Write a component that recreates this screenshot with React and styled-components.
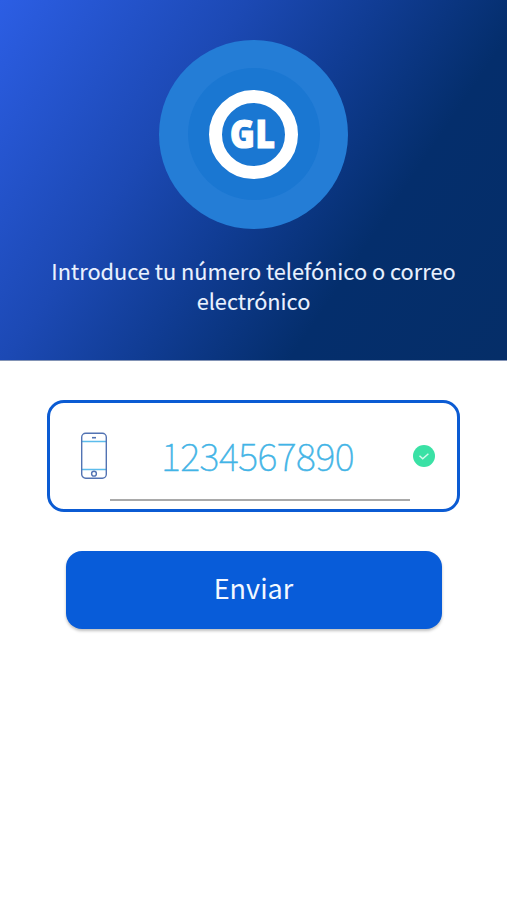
import React from "react";
import styled, { createGlobalStyle } from "styled-components";

const GlobalStyle = createGlobalStyle`
  * { box-sizing: border-box; }
  body { margin: 0; background: #fff; }
`;

const Screen = styled.main`
  display: flex;
  flex-direction: column;
  align-items: center;
  min-height: 900px;
  font-family: "Noto Sans CJK SC", "Noto Sans", sans-serif;
  background: #fff;
`;

const Header = styled.header`
  width: 100%;
  height: 361px;
  padding-top: 39.5px;
  display: flex;
  flex-direction: column;
  align-items: center;
  border-bottom: 1px solid #8293b5;
  background: linear-gradient(124deg, #2c5ee4 0%, #1c49b4 33%, #103c93 51%, #042e6c 71%, #052e68 100%);
`;

const Halo = styled.div`
  width: 189px;
  height: 189px;
  border-radius: 50%;
  background: #247dd6;
  display: grid;
  place-items: center;
`;

const InnerHalo = styled.div`
  width: 132px;
  height: 132px;
  border-radius: 50%;
  background: #1a77d2;
  display: grid;
  place-items: center;
`;

const Ring = styled.div`
  width: 89px;
  height: 89px;
  border: 13.5px solid #fff;
  border-radius: 50%;
  display: flex;
  align-items: center;
  justify-content: center;
`;

const Monogram = styled.span`
  color: #fff;
  font-family: "Open Sans", sans-serif;
  font-size: 38px;
  line-height: 40px;
  font-weight: 800;
  letter-spacing: 0.8px;
  padding-bottom: 3px;
  margin: 0 -12px 0 -14px;
  transform: scaleX(0.88);
  -webkit-text-stroke: 1.2px #fff;
`;

const Prompt = styled.h1`
  width: 430px;
  margin: 27.5px 0 0;
  color: #eaf2ff;
  font-size: 21.75px;
  line-height: 30px;
  font-weight: 400;
  text-align: center;
  -webkit-text-stroke: 0.1px #eaf2ff;
`;

const Form = styled.form`
  display: flex;
  flex-direction: column;
  align-items: center;
  gap: 39px;
  margin-top: 39px;
`;

const Field = styled.label`
  width: 413px;
  height: 112px;
  border: 3px solid #0b5bd3;
  border-radius: 17px;
  display: grid;
  grid-template-columns: 60px 300px 47px;
`;

const IconCell = styled.span`
  display: flex;
  justify-content: flex-end;
  padding-top: ${(p) => p.$top}px;
  padding-right: ${(p) => p.$right}px;
`;

const NumberInput = styled.input`
  width: 300px;
  height: 98px;
  padding: 6px 5px 0 0;
  border: 0;
  border-bottom: 2px solid #a9a9a9;
  outline: 0;
  background: transparent;
  color: #42b4e6;
  font-family: inherit;
  font-size: 38px;
  font-weight: 100;
  letter-spacing: -0.5px;
  text-align: center;
  -webkit-text-stroke: 0.5px #42b4e6;
`;

const SubmitButton = styled.button`
  width: 376px;
  height: 78px;
  border: 0;
  border-radius: 16px;
  background: #085cd9;
  box-shadow: 0 2px 3px rgba(0, 0, 0, 0.25);
  color: #f3f8ff;
  font-family: inherit;
  font-size: 27px;
  line-height: 40px;
  padding: 0 0 4px;
`;

const PhoneIcon = () => (
  <svg width="28" height="48" viewBox="0 0 28 48" fill="none">
    <path d="M1.5 9.5h25M1.5 37.5h25" stroke="#5cbcec" strokeWidth="1.5" />
    <rect x="1.7" y="1.2" width="24.6" height="45" rx="4" stroke="#5273b3" strokeWidth="1.4" />
    <path d="M12 5.7h4" stroke="#5273b3" strokeWidth="1.6" />
    <circle cx="14" cy="41.7" r="2.4" stroke="#5273b3" strokeWidth="1.4" />
  </svg>
);

const ValidIcon = () => (
  <svg width="22" height="22" viewBox="0 0 22 22" fill="none">
    <circle cx="11" cy="11" r="11" fill="#3ae1a5" />
    <path d="M6.5 10.8l3.2 2.9 5.7-5" stroke="#d4faec" strokeWidth="1.5" />
  </svg>
);

export default function App() {
  return (
    <Screen>
      <GlobalStyle />
      <Header>
        <Halo>
          <InnerHalo>
            <Ring>
              <Monogram>GL</Monogram>
            </Ring>
          </InnerHalo>
        </Halo>
        <Prompt>Introduce tu número telefónico o correo electrónico</Prompt>
      </Header>
      <Form>
        <Field>
          <IconCell $top={29} $right={2}>
            <PhoneIcon />
          </IconCell>
          <NumberInput defaultValue="1234567890" aria-label="Número telefónico" />
          <IconCell $top={42} $right={22.5}>
            <ValidIcon />
          </IconCell>
        </Field>
        <SubmitButton type="button">Enviar</SubmitButton>
      </Form>
    </Screen>
  );
}
